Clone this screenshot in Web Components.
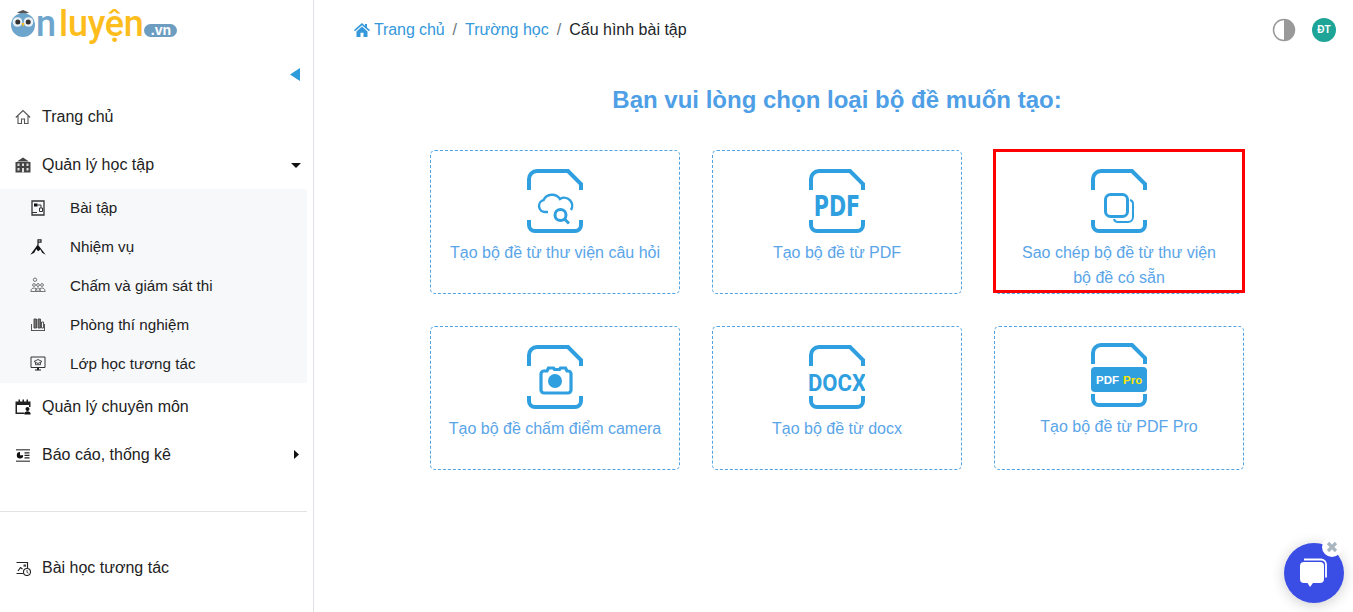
<!DOCTYPE html>
<html lang="vi">
<head>
<meta charset="utf-8">
<title>Cấu hình bài tập</title>
<style>
    html, body { margin: 0; padding: 0; height: 100%; background: #fff; }
    body { display: flex; height: 612px; overflow: hidden; font-family: "Liberation Sans", Arial, sans-serif; }
</style>
</head>
<body>
<side-bar>
    <nav-item icon="home">Trang chủ</nav-item>
    <nav-item icon="school" caret="down">Quản lý học tập</nav-item>
    <sub-menu>
        <sub-item icon="task">Bài tập</sub-item>
        <sub-item icon="mission">Nhiệm vụ</sub-item>
        <sub-item icon="people">Chấm và giám sát thi</sub-item>
        <sub-item icon="lab">Phòng thí nghiệm</sub-item>
        <sub-item icon="screen">Lớp học tương tác</sub-item>
    </sub-menu>
    <nav-item icon="calendar">Quản lý chuyên môn</nav-item>
    <nav-item icon="report" caret="right">Báo cáo, thống kê</nav-item>
    <nav-item slot="bottom" icon="lesson">Bài học tương tác</nav-item>
</side-bar>
<main-panel>
    <option-card icon="cloud">Tạo bộ đề từ thư viện câu hỏi</option-card>
    <option-card icon="pdf">Tạo bộ đề từ PDF</option-card>
    <option-card icon="copy" marked>Sao chép bộ đề từ thư viện bộ đề có sẵn</option-card>
    <option-card icon="camera">Tạo bộ đề chấm điểm camera</option-card>
    <option-card icon="docx">Tạo bộ đề từ docx</option-card>
    <option-card icon="pdfpro" lifted>Tạo bộ đề từ PDF Pro</option-card>
</main-panel>
<chat-bubble></chat-bubble>

<script>
const navIcons = {
    home: `<path d="M.8 8.500 8 1.500l7.200 7M3 7v7.500h3.500v-4.500h3v4.500H13V7" fill="none" stroke="#555" stroke-width="1.100"/>`,
    school: `<path d="M8 .5 14 4.500H2zM.5 5h15v10.500H.5z" fill="#444"/><path d="M2.500 6.500h2v2.500h-2zM7 6.500h2v2.500H7zM11.500 6.500h2v2.500h-2zM2.500 11h2v2.500h-2zM11.500 11h2v2.500h-2zM7 11h2v4.500H7z" fill="#ddd"/>`,
    calendar: `<path d="M.5 2.500h15V8h-1.500V6H2v7.500h7.500V15H.5z" fill="#222"/><path d="M3.500.5h1.500v3.500H3.500zM7.500.5H9v3.500H7.500zM11.500.5H13v3.500h-1.500z" fill="#222"/><circle cx="12.500" cy="10" r="2" fill="#111"/><path d="M9.300 15.500c0-4.300 6.400-4.300 6.400 0z" fill="#111"/>`,
    report: `<path d="M1 2h14v1.500H1zM1 13.500h14V15H1z" fill="#666"/><path d="M5 5a3.200 3.200 0 1 0 3.200 3.200H5z" fill="#111"/><path d="M9.500 5.200h5v1.300h-5zM9.500 7.700h5V9h-5zM9.500 10.200h5v1.300h-5z" fill="#222"/>`,
    lesson: `<path d="M1.500 2.500h11V8M8 13.500H1.500z" fill="none" stroke="#222" stroke-width="1.200"/><path d="M3 11l2.500-3.500 2 1.500" fill="none" stroke="#222" stroke-width="1.200"/><circle cx="12" cy="12" r="3.500" fill="#fff" stroke="#222" stroke-width="1.100"/><path d="M12 10v2.300l1.500 1" fill="none" stroke="#222" stroke-width=".8"/><path d="M8.500 4.500h2.500v2.200H8.500z" fill="#444"/>`,
    task: `<path d="M2 1h12v14H2z" fill="none" stroke="#333" stroke-width="1.300"/><path d="M4 3.500h3.500v3H4z" fill="#111"/><path d="M7.500 5h3.500v3M9.500 8h3v3.500h-3z" fill="none" stroke="#333"/><path d="M2 12.500h5" stroke="#333"/>`,
    mission: `<path d="M.3 15.700 7.800 5.500l7.900 10.200-3.600-2-1.600-3.200-2.400 1.700-1.900-2.200-1.900 3.700z" fill="#111"/><path d="M8 6V.8h3v2.400H8" fill="none" stroke="#222" stroke-width="1.200"/>`,
    people: `<g fill="none" stroke="#555" stroke-width=".8"><circle cx="5" cy="2.700" r="1.700"/><circle cx="4" cy="8" r="1.400"/><circle cx="8" cy="8" r="1.400"/><circle cx="12" cy="8" r="1.400"/><path d="M1 14c0-4 6-4 6 0M5.500 14c0-4 5-4 5 0M9 14c0-4 6-4 6 0M.5 14.500h15"/></g>`,
    lab: `<g fill="none" stroke="#444" stroke-width=".9"><path d="M1 14.500h14M1.500 8v6.500M14.500 8v6.500"/><path d="M4 3h2.500v9H4zM8 3h2.500v9H8z" fill="#777"/><path d="M11.500 6h2v6h-2z"/></g>`,
    screen: `<path d="M1 2h14v10.500H1z" fill="none" stroke="#333"/><path d="M8 4.500 12 6.500 8 8.500 4 6.500zM5.500 7.500v2.200h5V7.500" fill="none" stroke="#333" stroke-width=".9"/><path d="M5 14.500h6v1H5zM7 12.500h2v2H7z" fill="#222"/>`
}

const navIcon = (name) => `<svg width="16" height="16" viewBox="0 0 16 16">${navIcons[name]}</svg>`

const carets = {
    down: `<svg width="10" height="5" viewBox="0 0 10 5"><path d="M0 0h10L5 5z" fill="#111"/></svg>`,
    right: `<svg width="5" height="9" viewBox="0 0 5 9"><path d="M0 0l5 4.500L0 9z" fill="#111"/></svg>`
}

class SideBar extends HTMLElement {
    constructor() {
        super()
        this.attachShadow({ mode: 'open' }).innerHTML = `
            <style>
                :host { display: flex; flex-direction: column; flex: none; width: 313px; height: 612px; box-sizing: content-box; border-right: 1px solid #dee2e6; background: #fff; }
                .logo { display: flex; align-items: flex-start; height: 48px; padding: 4px 0 0 10px; box-sizing: border-box; }
                .logo svg { flex: none; margin-top: 5px; }
                .on, .luyen { font: 500 36px/40px Roboto, sans-serif; }
                .on { color: #6ea5cc; }
                .luyen { color: #fdbd1d; margin-left: 3px; letter-spacing: -.3px; }
                .vn { align-self: flex-start; margin: 20px 0 0 1px; width: 33px; height: 13px; border-radius: 7px; background: #6d9ec2; color: #fff; font: 700 14px/13px "Liberation Sans", sans-serif; text-align: center; }
                .toggle { display: flex; justify-content: flex-end; height: 45px; padding: 20px 13px 0 0; box-sizing: border-box; }
                .list { display: flex; flex-direction: column; width: 307px; }
                hr { width: 307px; height: 1px; border: 0; background: #e3e3e3; margin: 32px 0 32px; }
            </style>
            <div class="logo">
                <svg width="26" height="32" viewBox="0 0 26 32">
                    <path d="M7 3.500 13 1l6 2.500-6 2z" fill="#555"/>
                    <circle cx="13" cy="16" r="12" fill="#6ea5cc"/>
                    <circle cx="7.500" cy="13" r="4.800" fill="#e9f1f6"/><circle cx="18.500" cy="13" r="4.800" fill="#e9f1f6"/>
                    <circle cx="7.800" cy="13" r="2.500" fill="#333"/><circle cx="18.200" cy="13" r="2.500" fill="#333"/>
                    <path d="M11.500 14h3L13 18z" fill="#fdbd1d"/>
                </svg>
                <span class="on">n</span><span class="luyen">luyện</span><span class="vn">.vn</span>
            </div>
            <div class="toggle"><svg width="10" height="13" viewBox="0 0 10 13"><path d="M10 0v13L0 6.500z" fill="#2d9cdb"/></svg></div>
            <div class="list"><slot></slot></div>
            <hr>
            <div class="list"><slot name="bottom"></slot></div>
        `
    }
}

class NavItem extends HTMLElement {
    constructor() {
        super()
        this.attachShadow({ mode: 'open' })
    }
    connectedCallback() {
        const caret = carets[this.getAttribute('caret')] || ''
        this.shadowRoot.innerHTML = `
            <style>
                :host { display: flex; align-items: center; height: 48px; padding: 0 6px 0 15px; box-sizing: border-box; color: #222; font-size: 16px; font-family: "Liberation Sans", Arial, sans-serif; }
                svg { flex: none; }
                .icon { display: flex; margin-right: 11px; }
                .label { flex: 1; }
                .caret { display: flex; width: 10px; justify-content: center; }
            </style>
            <span class="icon">${navIcon(this.getAttribute('icon'))}</span>
            <span class="label"><slot></slot></span>
            <span class="caret">${caret}</span>
        `
    }
}

class SubMenu extends HTMLElement {
    constructor() {
        super()
        this.attachShadow({ mode: 'open' }).innerHTML = `
            <style>
                :host { display: flex; flex-direction: column; background: #f7f8fa; }
            </style>
            <slot></slot>
        `
    }
}

class SubItem extends HTMLElement {
    constructor() {
        super()
        this.attachShadow({ mode: 'open' })
    }
    connectedCallback() {
        this.shadowRoot.innerHTML = `
            <style>
                :host { display: flex; align-items: center; height: 38.800px; padding: 0 0 1px 30px; box-sizing: border-box; color: #222; font-size: 15.200px; font-family: "Liberation Sans", Arial, sans-serif; }
                .icon { display: flex; margin-right: 24px; }
            </style>
            <span class="icon">${navIcon(this.getAttribute('icon'))}</span>
            <span><slot></slot></span>
        `
    }
}

class TopBar extends HTMLElement {
    constructor() {
        super()
        this.attachShadow({ mode: 'open' }).innerHTML = `
            <style>
                :host { display: flex; align-items: center; justify-content: space-between; height: 59px; padding: 0 17px 0 33px; font-size: 16px; font-family: "Liberation Sans", Arial, sans-serif; }
                .crumbs { display: flex; align-items: center; }
                .crumbs svg { margin-right: 4px; }
                .link { color: #3498db; }
                .first { letter-spacing: -.1px; }
                .sep { color: #6c757d; padding: 0 8px; }
                .current { color: #212529; }
                .tools { display: flex; align-items: center; gap: 16px; }
                .avatar { display: flex; align-items: center; justify-content: center; width: 24px; height: 24px; border-radius: 50%; background: #1fa597; color: #fff; font-size: 10px; font-weight: 700; }
            </style>
            <div class="crumbs">
                <svg width="16" height="14" viewBox="0 0 16 14"><path d="M8 0 0 7l1 1.200L8 2.200l7 6L16 7l-3-2.600V1h-2v1.700zM2.500 8.500V14H6.500V9.800h3V14h4V8.500L8 3.600z" fill="#3498db"/></svg>
                <span class="link first">Trang chủ</span><span class="sep">/</span>
                <span class="link">Trường học</span><span class="sep">/</span>
                <span class="current">Cấu hình bài tập</span>
            </div>
            <div class="tools">
                <svg width="24" height="24" viewBox="0 0 24 24"><circle cx="12" cy="12" r="10.500" fill="#fff" stroke="#999" stroke-width="1.500"/><path d="M12 1.500a10.500 10.500 0 0 1 0 21z" fill="#999"/></svg>
                <span class="avatar">ĐT</span>
            </div>
        `
    }
}

class MainPanel extends HTMLElement {
    constructor() {
        super()
        this.attachShadow({ mode: 'open' }).innerHTML = `
            <style>
                :host { display: block; flex: 1; padding-left: 7px; font-family: "Liberation Sans", Arial, sans-serif; }
                h1 { margin: 25px 0 34px; height: 32px; color: #4f9fe6; font-size: 24px; line-height: 32px; font-weight: 700; text-align: center; }
                .grid { display: grid; grid-template-columns: repeat(3, 250px); grid-auto-rows: 144px; gap: 32px; justify-content: center; }
            </style>
            <top-bar></top-bar>
            <h1>Bạn vui lòng chọn loại bộ đề muốn tạo:</h1>
            <div class="grid"><slot></slot></div>
        `
    }
}

const fileFrame = `
    <path d="M2 21V10a8 8 0 0 1 8-8H41L54 15V21M2 51V56a6 6 0 0 0 6 6H48a6 6 0 0 0 6-6V51" fill="none" stroke="#2f9fdf" stroke-width="4"/>
`

const cardIcons = {
    cloud: `<g fill="none" stroke="#2f9fdf" stroke-width="2.400">
            <path d="M21 43h-3a6 6 0 0 1-1.500-11.800A9.500 9.500 0 0 1 33 30A8 8 0 0 1 44 41"/>
            <circle cx="33.500" cy="46" r="5.500" stroke-width="3"/><path d="M37.500 50l4.500 4.500" stroke-width="3"/>
        </g>`,
    pdf: `<text transform="translate(28 47) scale(.82 1)" text-anchor="middle" font-family="DejaVu Sans Condensed, Liberation Sans Narrow, sans-serif" font-weight="700" font-size="28" fill="#2f9fdf">PDF</text>`,
    copy: `<g fill="none" stroke="#2f9fdf"><path d="M39 31a4 4 0 0 1 3 4v13a5 5 0 0 1-5 5H27a4 4 0 0 1-4-3" stroke-width="2"/><rect x="14.500" y="25.500" width="22" height="22" rx="5" stroke-width="3"/></g>`,
    camera: `<path d="M17 26h3l1.500-3h5l1 1.500h5l1-1.500h5l1.500 3h1a3 3 0 0 1 3 3v16a3 3 0 0 1-3 3H17a3 3 0 0 1-3-3V29a3 3 0 0 1 3-3z" fill="none" stroke="#2f9fdf" stroke-width="3.200"/><circle cx="28" cy="36" r="7" fill="#2f9fdf"/>`,
    docx: `<text transform="translate(28 45.500) scale(.92 1)" text-anchor="middle" font-family="Roboto, sans-serif" font-weight="700" font-size="24" fill="#2f9fdf">DOCX</text>`,
    pdfpro: `<rect x="0" y="24" width="56" height="25" rx="4" fill="#2f9fdf"/><text x="5" y="40.500" font-family="Liberation Sans, sans-serif" font-weight="700" font-size="11.500" fill="#fff">PDF</text><text x="32" y="40.500" font-family="Liberation Sans, sans-serif" font-weight="700" font-size="11.500" fill="#ffe600">Pro</text>`
}

class OptionCard extends HTMLElement {
    constructor() {
        super()
        this.attachShadow({ mode: 'open' })
    }
    connectedCallback() {
        const mark = this.hasAttribute('marked') ? '<div class="mark"></div>' : ''
        const top = this.hasAttribute('lifted') ? 16 : 18
        this.shadowRoot.innerHTML = `
            <style>
                :host { display: flex; flex-direction: column; align-items: center; position: relative; box-sizing: border-box; padding: ${top}px 17px 0; border: 1px dashed #4fa3e3; border-radius: 5px; background: #fff; color: #5aa5e8; font-size: 16px; line-height: 25px; text-align: center; font-family: "Liberation Sans", Arial, sans-serif; }
                svg { flex: none; display: block; margin-bottom: 7px; }
                .mark { position: absolute; top: -2px; left: -2px; right: -2px; bottom: 0; border: 3px solid #f00; }
            </style>
            <svg width="56" height="64" viewBox="0 0 56 64">${fileFrame}${cardIcons[this.getAttribute('icon')]}</svg>
            <div><slot></slot></div>
            ${mark}
        `
    }
}

class ChatBubble extends HTMLElement {
    constructor() {
        super()
        this.attachShadow({ mode: 'open' }).innerHTML = `
            <style>
                :host { display: block; position: fixed; right: 9px; bottom: 9px; width: 60px; height: 60px; border-radius: 50%; background: #3a4de4; box-shadow: 0 2px 14px rgba(0,0,0,.2); }
                .chat { position: absolute; left: 14px; top: 15px; }
                .close { position: absolute; right: 2px; top: -6px; width: 20px; height: 20px; border-radius: 50%; background: #fff; display: flex; align-items: center; justify-content: center; }
            </style>
            <svg class="chat" width="32" height="32" viewBox="0 0 32 32">
                <path d="M6 1.500h17a5 5 0 0 1 5 5v13" fill="none" stroke="#fff" stroke-width="1.800"/>
                <path d="M6 4h16a4 4 0 0 1 4 4v13a4 4 0 0 1-4 4h-7l-3 4-2.500-4H6a4 4 0 0 1-4-4V8a4 4 0 0 1 4-4z" fill="#fff"/>
            </svg>
            <span class="close"><svg width="12" height="12" viewBox="0 0 12 12"><path d="M2 2l8 8M10 2l-8 8" stroke="#aab6bf" stroke-width="3.200"/></svg></span>
        `
    }
}

customElements.define('nav-item', NavItem)
customElements.define('sub-item', SubItem)
customElements.define('sub-menu', SubMenu)
customElements.define('side-bar', SideBar)
customElements.define('top-bar', TopBar)
customElements.define('option-card', OptionCard)
customElements.define('main-panel', MainPanel)
customElements.define('chat-bubble', ChatBubble)
</script>
</body>
</html>
